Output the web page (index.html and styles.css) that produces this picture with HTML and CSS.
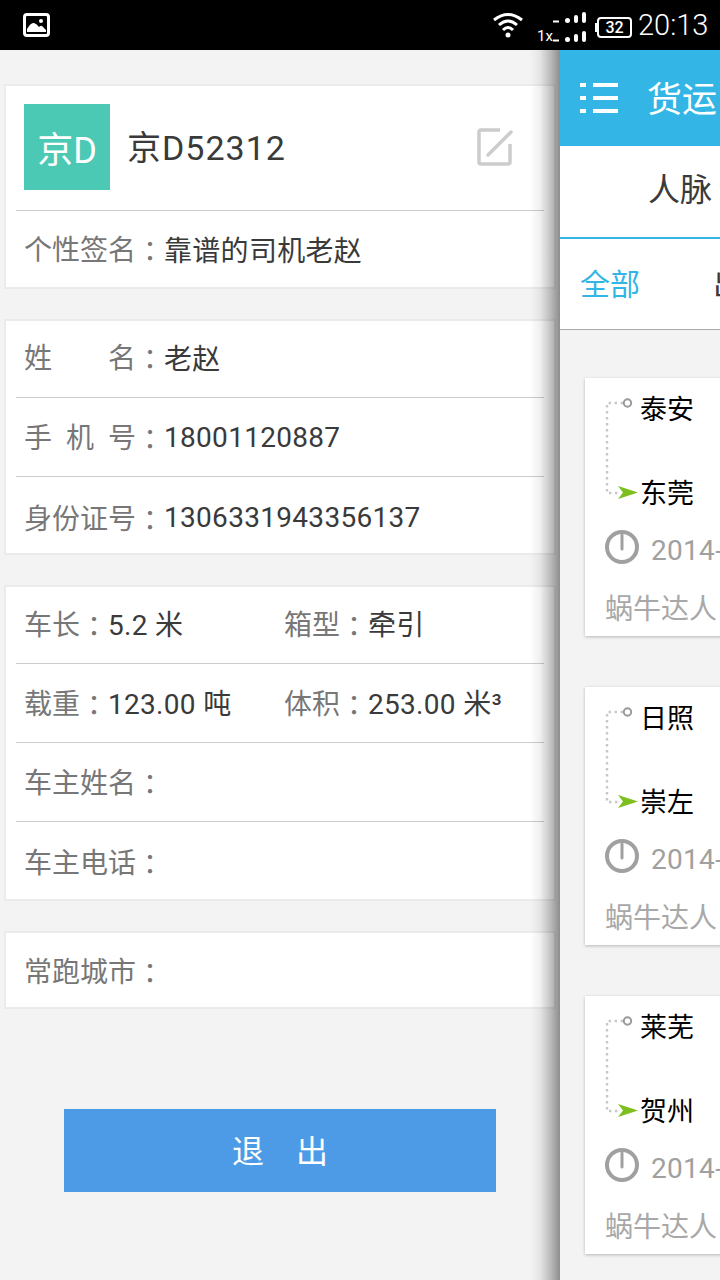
FILE: index.html
```html
<!DOCTYPE html>
<html lang="zh-CN">
  <head>
    <meta charset="UTF-8" />
    <meta name="viewport" content="width=device-width, initial-scale=1.0" />
    <title>个人信息</title>
    <link rel="stylesheet" href="styles.css">
  </head>
  <body>
    <div class="statusbar">
      <svg class="picture-icon" width="27" height="24" viewBox="0 0 27 24">
        <rect x="1.5" y="1.5" width="24" height="21" rx="2.5" fill="none" stroke="#fff" stroke-width="3" />
        <path d="M4 19 V16 Q8 9 11 10 Q14 11 16 14 Q18 12 19 13 L23 17 V19 Z" fill="#fff" />
        <circle cx="18" cy="8" r="2" fill="#fff" />
      </svg>
      <div class="status-right">
        <svg class="wifi-icon" width="32" height="26" viewBox="0 0 32 26">
          <path d="M2 8 Q16 -3 30 8" fill="none" stroke="#fff" stroke-width="3" />
          <path d="M7 13 Q16 5 25 13" fill="none" stroke="#fff" stroke-width="3" />
          <path d="M11 18 Q16 13 21 18" fill="none" stroke="#fff" stroke-width="3" />
          <circle cx="16" cy="23" r="2.5" fill="#fff" />
        </svg>
        <div class="signal">
          <svg width="33" height="11" viewBox="0 0 33 11">
            <rect x="0" y="8.5" width="6" height="2" fill="#fff" />
            <rect x="12" y="6" width="5" height="5" rx="2.5" fill="#fff" />
            <rect x="21" y="3" width="4" height="8" rx="2" fill="#fff" />
            <rect x="29" y="0" width="4" height="11" rx="2" fill="#fff" />
          </svg>
          <div class="signal-row">
            <span class="sim-label">1x</span>
            <svg width="33" height="11" viewBox="0 0 33 11">
              <rect x="0" y="8.5" width="6" height="2" fill="#fff" />
              <rect x="12" y="6" width="5" height="5" rx="2.5" fill="#fff" />
              <rect x="21" y="3" width="4" height="8" rx="2" fill="#fff" />
              <rect x="29" y="0" width="4" height="11" rx="2" fill="#fff" />
            </svg>
          </div>
        </div>
        <div class="battery-nub"></div>
        <div class="battery"><span class="battery-num">32</span></div>
        <span class="clock">20:13</span>
      </div>
    </div>

    <div class="screen">
      <div class="profile">
        <div class="card">
          <div class="car-head">
            <div class="avatar">京D</div>
            <div class="plate">京D52312</div>
            <svg class="edit-icon" width="36" height="38" viewBox="0 0 36 38">
              <path d="M23 2 H4 Q2 2 2 4 V34 Q2 36 4 36 H31 Q33 36 33 34 V16" fill="none" stroke="#ccc" stroke-width="3.5" />
              <path d="M11 27 L34 4" fill="none" stroke="#ccc" stroke-width="3.5" stroke-linecap="round" />
            </svg>
          </div>
          <div class="row row-sign"><span class="label">个性签名<span class="colon" lang="zh-TW">：</span></span>靠谱的司机老赵</div>
        </div>

        <div class="card">
          <div class="row"><span class="label"><span class="label-spread"><i>姓</i><i>名</i></span><span class="colon" lang="zh-TW">：</span></span>老赵</div>
          <div class="row row-phone"><span class="label"><span class="label-spread"><i>手</i><i>机</i><i>号</i></span><span class="colon" lang="zh-TW">：</span></span>18001120887</div>
          <div class="row row-idcard"><span class="label">身份证号<span class="colon" lang="zh-TW">：</span></span>1306331943356137</div>
        </div>

        <div class="card card-truck">
          <div class="row row-split">
            <div class="cell"><span class="label">车长<span class="colon" lang="zh-TW">：</span></span>5.2 米</div>
            <div class="cell"><span class="label">箱型<span class="colon" lang="zh-TW">：</span></span>牵引</div>
          </div>
          <div class="row row-split">
            <div class="cell"><span class="label">载重<span class="colon" lang="zh-TW">：</span></span>123.00 吨</div>
            <div class="cell"><span class="label">体积<span class="colon" lang="zh-TW">：</span></span>253.00 米³</div>
          </div>
          <div class="row"><span class="label">车主姓名<span class="colon" lang="zh-TW">：</span></span></div>
          <div class="row row-tall"><span class="label">车主电话<span class="colon" lang="zh-TW">：</span></span></div>
        </div>

        <div class="card">
          <div class="row row-single"><span class="label">常跑城市<span class="colon" lang="zh-TW">：</span></span></div>
        </div>

        <button class="logout">退 出</button>
      </div>

      <div class="panel">
        <div class="panel-bar">
          <svg class="menu-icon" width="38" height="32" viewBox="0 0 38 32">
            <rect x="0" y="1" width="6" height="4" fill="#fff" />
            <rect x="0" y="14" width="6" height="4" fill="#fff" />
            <rect x="0" y="27" width="6" height="4" fill="#fff" />
            <rect x="13" y="1" width="25" height="4" fill="#fff" />
            <rect x="13" y="14" width="25" height="4" fill="#fff" />
            <rect x="13" y="27" width="25" height="4" fill="#fff" />
          </svg>
          <span class="panel-title">货运</span>
        </div>
        <div class="panel-tab">人脉</div>
        <div class="panel-filter">
          <span class="filter-on">全部</span>
          <span class="filter-off">出</span>
        </div>
        <div class="trips">
          <div class="trip">
            <div class="route">
              <svg class="route-line" width="36" height="104" viewBox="0 0 36 104">
                <path d="M18 6 H2 V96 H15" fill="none" stroke="#c8c8c8" stroke-width="2.4" stroke-dasharray="2.4 3.6" />
                <circle cx="22.5" cy="6" r="3.7" fill="none" stroke="#999" stroke-width="2" />
                <path d="M13 89 L33 95.5 L13 102 L18 95.5 Z" fill="#7cbf1f" />
              </svg>
              <div class="cities"><span>泰安</span><span>东莞</span></div>
            </div>
            <div class="trip-time">
              <svg width="34" height="34" viewBox="0 0 34 34">
                <circle cx="17" cy="17" r="15" fill="none" stroke="#a0a0a0" stroke-width="4" />
                <path d="M17 5 V19" stroke="#a0a0a0" stroke-width="3" stroke-linecap="round" />
              </svg>
              <span class="trip-date">2014-</span>
            </div>
            <div class="trip-user">蜗牛达人</div>
          </div>
          <div class="trip">
            <div class="route">
              <svg class="route-line" width="36" height="104" viewBox="0 0 36 104">
                <path d="M18 6 H2 V96 H15" fill="none" stroke="#c8c8c8" stroke-width="2.4" stroke-dasharray="2.4 3.6" />
                <circle cx="22.5" cy="6" r="3.7" fill="none" stroke="#999" stroke-width="2" />
                <path d="M13 89 L33 95.5 L13 102 L18 95.5 Z" fill="#7cbf1f" />
              </svg>
              <div class="cities"><span>日照</span><span>崇左</span></div>
            </div>
            <div class="trip-time">
              <svg width="34" height="34" viewBox="0 0 34 34">
                <circle cx="17" cy="17" r="15" fill="none" stroke="#a0a0a0" stroke-width="4" />
                <path d="M17 5 V19" stroke="#a0a0a0" stroke-width="3" stroke-linecap="round" />
              </svg>
              <span class="trip-date">2014-</span>
            </div>
            <div class="trip-user">蜗牛达人</div>
          </div>
          <div class="trip">
            <div class="route">
              <svg class="route-line" width="36" height="104" viewBox="0 0 36 104">
                <path d="M18 6 H2 V96 H15" fill="none" stroke="#c8c8c8" stroke-width="2.4" stroke-dasharray="2.4 3.6" />
                <circle cx="22.5" cy="6" r="3.7" fill="none" stroke="#999" stroke-width="2" />
                <path d="M13 89 L33 95.5 L13 102 L18 95.5 Z" fill="#7cbf1f" />
              </svg>
              <div class="cities"><span>莱芜</span><span>贺州</span></div>
            </div>
            <div class="trip-time">
              <svg width="34" height="34" viewBox="0 0 34 34">
                <circle cx="17" cy="17" r="15" fill="none" stroke="#a0a0a0" stroke-width="4" />
                <path d="M17 5 V19" stroke="#a0a0a0" stroke-width="3" stroke-linecap="round" />
              </svg>
              <span class="trip-date">2014-</span>
            </div>
            <div class="trip-user">蜗牛达人</div>
          </div>
        </div>
      </div>
    </div>
  </body>
</html>
```

FILE: styles.css
```css
* {
  margin: 0;
  padding: 0;
  box-sizing: border-box;
}
body {
  width: 720px;
  height: 1280px;
  overflow: hidden;
  font-family: Roboto, "Noto Sans CJK SC", sans-serif;
  color: #3a3a3a;
  background-color: #f3f3f3;
}

.statusbar {
  height: 50px;
  background-color: #000;
  display: flex;
  justify-content: space-between;
  align-items: center;
  padding: 0 12px 0 23px;
}
.picture-icon {
  display: block;
}
.status-right {
  display: flex;
  align-items: center;
}
.wifi-icon {
  margin-right: 13px;
}
.signal {
  width: 49px;
  display: flex;
  flex-direction: column;
  align-items: flex-end;
  gap: 8px;
  margin-right: 9px;
  padding-top: 4px;
}
.signal svg {
  display: block;
}
.signal-row {
  display: flex;
  align-items: flex-end;
}
.sim-label {
  color: #fff;
  font-size: 15px;
  line-height: 11px;
  width: 16px;
}
.battery-nub {
  width: 2px;
  height: 9px;
  background-color: #fff;
  margin-top: 5px;
}
.battery {
  width: 35px;
  height: 21px;
  border: 2px solid #fff;
  border-radius: 4px;
  display: flex;
  align-items: center;
  justify-content: center;
  margin: 5px 6px 0 0;
}
.battery-num {
  color: #fff;
  font-size: 16px;
  font-weight: 500;
}
.clock {
  color: #fff;
  font-size: 29px;
  font-weight: 300;
  width: 70px;
  white-space: nowrap;
}

.screen {
  display: flex;
  height: 1230px;
}

.profile {
  width: 560px;
  flex-shrink: 0;
  padding: 34px 4px 0;
}
.card {
  background-color: #fff;
  border: 2px solid #ebebeb;
  margin-bottom: 30px;
  padding: 0 10px;
}
.car-head {
  display: flex;
  align-items: center;
  height: 125px;
  padding: 18px 31px 20px 8px;
  border-bottom: 1px solid #ccc;
}
.avatar {
  width: 86px;
  height: 86px;
  background-color: #4cc9b4;
  color: #fff;
  font-size: 36px;
  display: flex;
  align-items: center;
  justify-content: center;
  margin-right: 17px;
}
.plate {
  flex: 1;
  font-size: 34px;
  letter-spacing: 1px;
  margin-bottom: 3px;
}
.edit-icon {
  display: block;
}
.row {
  height: 79px;
  display: flex;
  align-items: center;
  padding: 0 0 2px 8px;
  font-size: 28px;
  letter-spacing: 0.3px;
  border-bottom: 1px solid #ccc;
}
.card .row:first-child {
  height: 77px;
  padding-bottom: 4px;
}
.card .row:last-child {
  height: 76px;
  padding: 1px 0 0 8px;
  border-bottom: none;
}
.card .row-phone {
  padding-bottom: 0;
}
.card .row-idcard:last-child {
  padding-top: 5px;
}
.card .row-sign:last-child {
  padding-top: 0;
}
.card .row-tall:last-child {
  height: 77px;
}
.card .row-single:last-child {
  height: 74px;
}
.card-truck .row {
  padding-bottom: 0;
}
.card-truck .row:first-child {
  padding-bottom: 2px;
}
.card-truck .row:last-child {
  padding-top: 3px;
}
.row-split .cell {
  width: 262px;
}
.label {
  color: #777;
  letter-spacing: 0;
}
.colon {
  display: inline-block;
  width: 28px;
  text-align: center;
  font-family: "Noto Sans CJK TC", sans-serif;
  vertical-align: -2px;
}
.label-spread {
  display: inline-flex;
  width: 112px;
  justify-content: space-between;
}
.label-spread i {
  font-style: normal;
}

.logout {
  display: block;
  width: 432px;
  height: 83px;
  margin: 100px auto 0;
  padding-bottom: 4px;
  background-color: #4d9be6;
  color: #fff;
  border: none;
  font-family: inherit;
  font-size: 32px;
  word-spacing: 24px;
}

.panel {
  position: relative;
  width: 160px;
  flex-shrink: 0;
  background-color: #f3f3f3;
}
.panel::before {
  content: "";
  position: absolute;
  top: 0;
  bottom: 0;
  left: -30px;
  width: 30px;
  background: linear-gradient(to right, rgba(0, 0, 0, 0), rgba(0, 0, 0, 0.06) 33%, rgba(0, 0, 0, 0.22) 66%, rgba(0, 0, 0, 0.42));
}
.panel-bar {
  height: 96px;
  background-color: #33b5e5;
  display: flex;
  align-items: center;
  white-space: nowrap;
  overflow: hidden;
  padding-left: 20px;
}
.menu-icon {
  flex-shrink: 0;
  margin-right: 29px;
}
.panel-title {
  color: #fff;
  font-size: 35px;
  margin-bottom: 4px;
}
.panel-tab {
  height: 93px;
  background-color: #fff;
  border-bottom: 2px solid #33b5e5;
  display: flex;
  align-items: center;
  padding: 0 0 9px 88px;
  font-size: 32px;
}
.panel-filter {
  height: 91px;
  background-color: #fff;
  border-bottom: 1px solid #aaa;
  display: flex;
  align-items: center;
  white-space: nowrap;
  overflow: hidden;
  padding: 0 0 4px 20px;
  font-size: 30px;
}
.filter-on {
  color: #33b5e5;
  margin-right: 73px;
}
.filter-off {
  flex-shrink: 0;
}
.trips {
  padding: 48px 0 0 25px;
}
.trip {
  width: 200px;
  height: 258px;
  background-color: #fff;
  box-shadow: 0 1px 3px rgba(0, 0, 0, 0.25);
  margin-bottom: 51px;
  padding: 12px 0 0 20px;
  white-space: nowrap;
}
.route {
  position: relative;
  height: 137px;
  padding-left: 35px;
}
.route-line {
  position: absolute;
  left: 0;
  top: 7px;
}
.cities {
  display: flex;
  flex-direction: column;
  gap: 44px;
  color: #000;
  font-size: 27px;
}
.cities span {
  line-height: 40px;
}
.trip-time {
  display: flex;
  align-items: center;
  gap: 12px;
  color: #a0a0a0;
  font-size: 28px;
  letter-spacing: 0.3px;
  height: 40px;
}
.trip-date {
  margin-top: 6px;
}
.trip-user {
  color: #a8a8a8;
  font-size: 28px;
  margin-top: 20px;
}
```
